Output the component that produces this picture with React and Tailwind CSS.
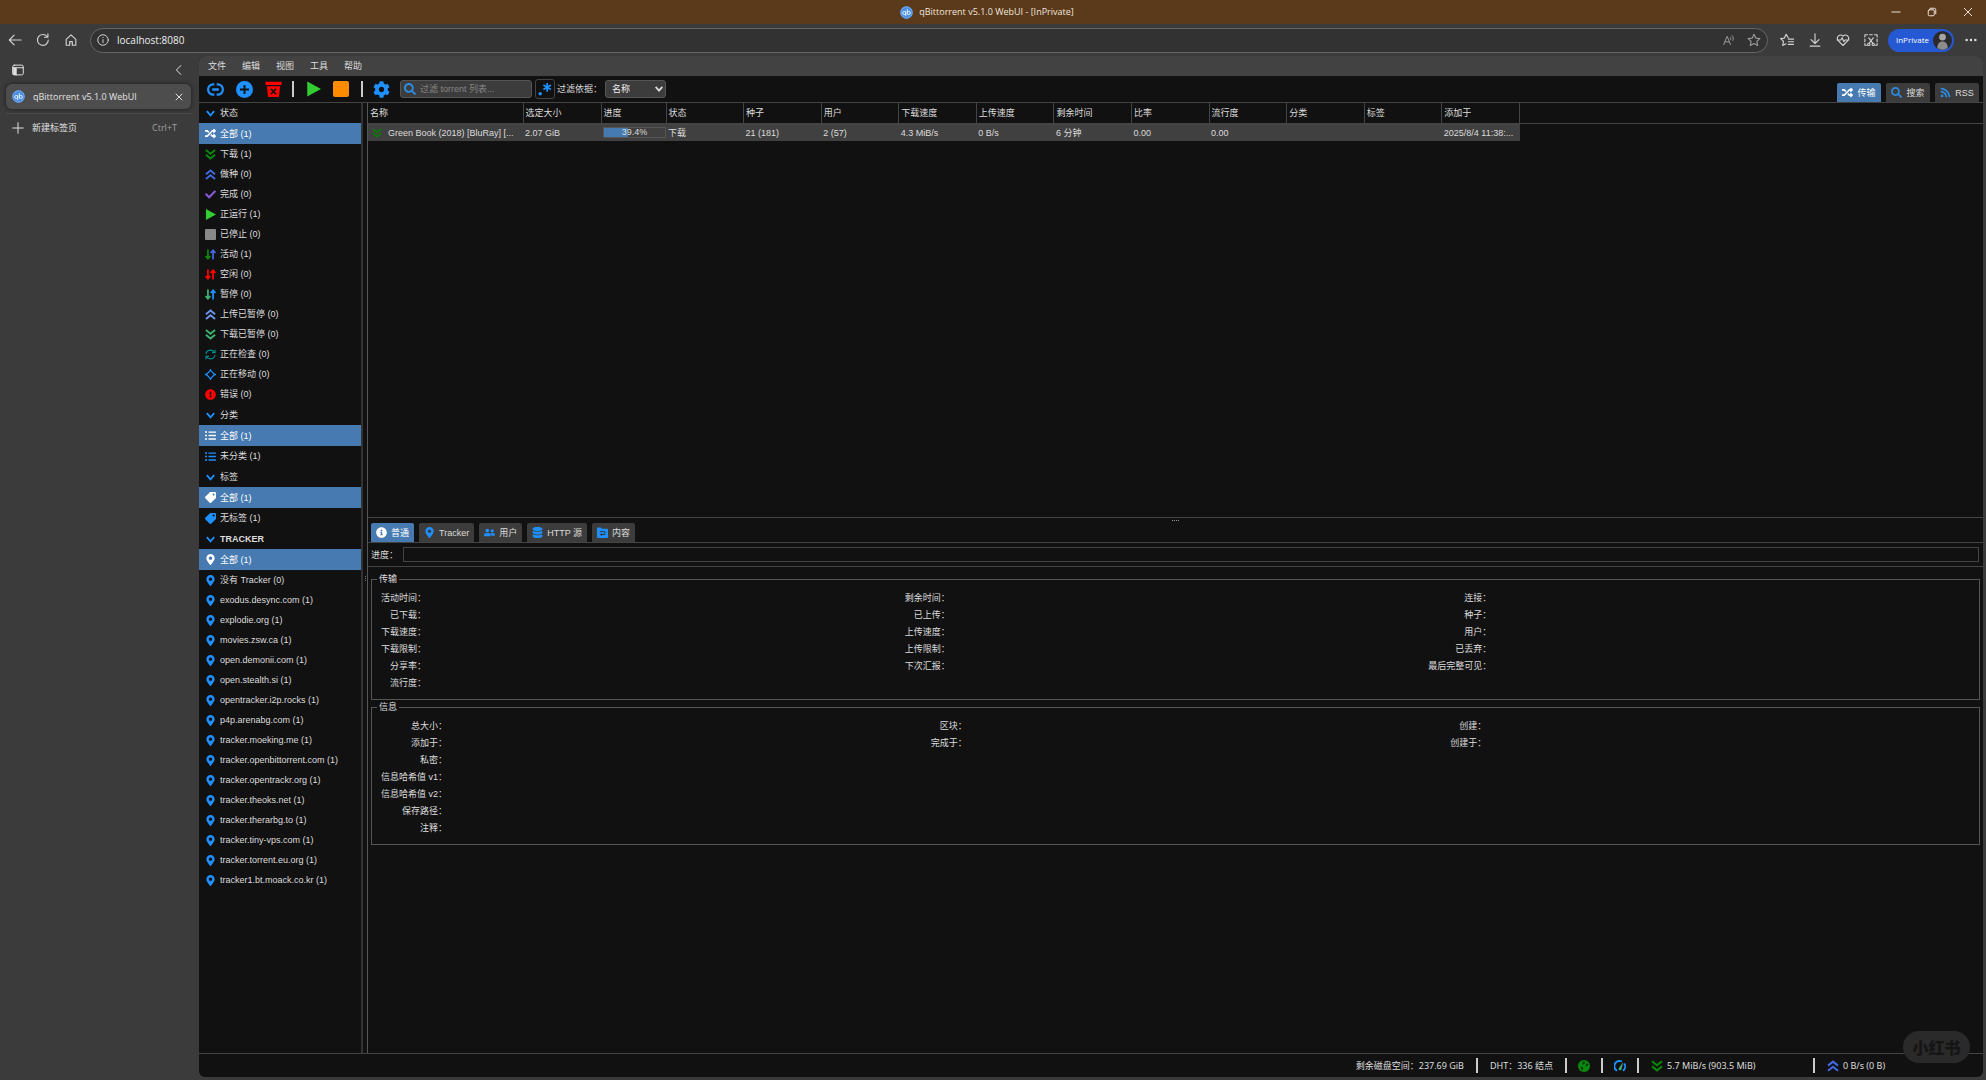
import React, { useState } from "react";
import {
  FaRandom,
  FaCheck,
  FaTag,
  FaMapMarkerAlt,
  FaListUl,
  FaInfoCircle,
  FaUserFriends,
  FaDatabase,
  FaSearch,
  FaRss,
  FaCog,
  FaExclamationCircle,
} from "react-icons/fa";

const Svg = ({ className, children, box = "0 0 16 16" }) => (
  <svg
    className={className}
    viewBox={box}
    fill="none"
    stroke="currentColor"
    strokeWidth="1.3"
    strokeLinecap="round"
    strokeLinejoin="round"
    aria-hidden="true"
  >
    {children}
  </svg>
);

const Favicon = () => (
  <svg className="size-[13px] shrink-0" viewBox="0 0 16 16" aria-hidden="true">
    <circle cx="8" cy="8" r="7.7" fill="#4c8ee0" />
    <circle cx="8" cy="8" r="7" fill="none" stroke="#7db2ee" />
    <g fill="none" stroke="#dcecff" strokeWidth="1.2">
      <circle cx="5.2" cy="8.6" r="1.9" />
      <path d="M7.1 6.5v6M9 3.8v6.6" />
      <circle cx="10.9" cy="8.6" r="1.9" />
    </g>
  </svg>
);

const Chevron = ({ className }) => (
  <svg className={className} viewBox="0 0 12 12" fill="none" stroke="currentColor" strokeWidth="2" aria-hidden="true">
    <path d="M2 3.5l4 4.5 4-4.5" />
  </svg>
);

const DoubleDown = ({ className }) => (
  <svg className={className} viewBox="0 0 12 12" fill="none" stroke="currentColor" strokeWidth="2.1" aria-hidden="true">
    <path d="M1 1.200l5 4 5-4M1 6.400l5 4 5-4" />
  </svg>
);

const DoubleUp = ({ className }) => (
  <svg className={className} viewBox="0 0 12 12" fill="none" stroke="currentColor" strokeWidth="2.1" aria-hidden="true">
    <path d="M1 5.600l5-4 5 4M1 10.800l5-4 5 4" />
  </svg>
);

const Play = ({ className }) => (
  <svg className={className} viewBox="0 0 12 12" fill="#32cd32" aria-hidden="true">
    <path d="M1 0l11 6-11 6z" />
  </svg>
);

const Arrows = ({ down, up }) => (
  <svg className="size-[11px] shrink-0" viewBox="0 0 12 12" fill="none" strokeWidth="1.9" aria-hidden="true">
    <path d="M3.2 .5v10M.6 7.600l2.600 3 2.600-3" stroke={down} />
    <path d="M8.800 11.500V2M6.200 4.400l2.600-3 2.600 3" stroke={up} />
  </svg>
);

const Checking = () => (
  <svg className="size-[11px] shrink-0" viewBox="0 0 12 12" fill="none" stroke="#008b8b" strokeWidth="1.3" aria-hidden="true">
    <path d="M1 5.2C1.6 2.6 3.600 1.200 6 1.200c1.900 0 3.400.9 4.300 2.400M11 6.800C10.400 9.400 8.400 10.800 6 10.800c-1.900 0-3.400-.9-4.300-2.400" />
    <path d="M10.900 .8v3.200H7.700M1.100 11.200V8h3.200" />
  </svg>
);

const Moving = () => (
  <svg className="size-[11px] shrink-0" viewBox="0 0 12 12" fill="none" stroke="#1e90ff" strokeWidth="1.4" aria-hidden="true">
    <path d="M6 1.500L10.500 6 6 10.500 1.500 6z" />
    <path d="M6 0v2M6 10v2M0 6h2M10 6h2" />
  </svg>
);

const FolderIcon = ({ className }) => (
  <svg className={className} viewBox="0 0 12 12" aria-hidden="true">
    <path d="M0 1.500C0 .9.400.5 1 .5h3l1.300 1.300H11c.6 0 1 .4 1 1v8.200c0 .6-.4 1-1 1H1c-.6 0-1-.4-1-1z" fill="#1e90ff" />
    <path d="M3 5h5.500v3.200H4M5.300 6.800L3.800 8.200l1.500 1.400" fill="none" stroke="#333" />
  </svg>
);

const dot = "size-[11px] shrink-0";

const status = [
  { icon: <FaRandom className={dot} />, label: "全部 (1)", active: true },
  { icon: <DoubleDown className={`${dot} text-[#0a8a0a]`} />, label: "下载 (1)" },
  { icon: <DoubleUp className={`${dot} text-[#4169e1]`} />, label: "做种 (0)" },
  { icon: <FaCheck className={`${dot} text-[#8458d6]`} />, label: "完成 (0)" },
  { icon: <Play className="size-[11px] shrink-0" />, label: "正运行 (1)" },
  { icon: <span className="size-[11px] shrink-0 rounded-[1px] bg-[#888888]" />, label: "已停止 (0)" },
  { icon: <Arrows down="#0a8a0a" up="#4169e1" />, label: "活动 (1)" },
  { icon: <Arrows down="#ff0000" up="#ff0000" />, label: "空闲 (0)" },
  { icon: <Arrows down="#3cb371" up="#1e90ff" />, label: "暂停 (0)" },
  { icon: <DoubleUp className={`${dot} text-[#6c95ed]`} />, label: "上传已暂停 (0)" },
  { icon: <DoubleDown className={`${dot} text-[#3cb371]`} />, label: "下载已暂停 (0)" },
  { icon: <Checking />, label: "正在检查 (0)" },
  { icon: <Moving />, label: "正在移动 (0)" },
  { icon: <FaExclamationCircle className={`${dot} text-[#ff0000]`} />, label: "错误 (0)" },
];

const categories = [
  { icon: <FaListUl className={dot} />, label: "全部 (1)", active: true },
  { icon: <FaListUl className={`${dot} text-[#1e90ff]`} />, label: "未分类 (1)" },
];

const tags = [
  { icon: <FaTag className={`${dot} -scale-x-100`} />, label: "全部 (1)", active: true },
  { icon: <FaTag className={`${dot} -scale-x-100 text-[#1e90ff]`} />, label: "无标签 (1)" },
];

const pin = <FaMapMarkerAlt className={`${dot} text-[#1e90ff]`} />;
const trackers = [
  { icon: <FaMapMarkerAlt className={dot} />, label: "全部 (1)", active: true },
  { icon: pin, label: "没有 Tracker (0)" },
  { icon: pin, label: "exodus.desync.com (1)" },
  { icon: pin, label: "explodie.org (1)" },
  { icon: pin, label: "movies.zsw.ca (1)" },
  { icon: pin, label: "open.demonii.com (1)" },
  { icon: pin, label: "open.stealth.si (1)" },
  { icon: pin, label: "opentracker.i2p.rocks (1)" },
  { icon: pin, label: "p4p.arenabg.com (1)" },
  { icon: pin, label: "tracker.moeking.me (1)" },
  { icon: pin, label: "tracker.openbittorrent.com (1)" },
  { icon: pin, label: "tracker.opentrackr.org (1)" },
  { icon: pin, label: "tracker.theoks.net (1)" },
  { icon: pin, label: "tracker.therarbg.to (1)" },
  { icon: pin, label: "tracker.tiny-vps.com (1)" },
  { icon: pin, label: "tracker.torrent.eu.org (1)" },
  { icon: pin, label: "tracker1.bt.moack.co.kr (1)" },
];

const columns = [
  ["名称", "Green Book (2018) [BluRay] [..."],
  ["选定大小", "2.07 GiB"],
  ["进度", "39.4%"],
  ["状态", "下载"],
  ["种子", "21 (181)"],
  ["用户", "2 (57)"],
  ["下载速度", "4.3 MiB/s"],
  ["上传速度", "0 B/s"],
  ["剩余时间", "6 分钟"],
  ["比率", "0.00"],
  ["流行度", "0.00"],
  ["分类", ""],
  ["标签", ""],
  ["添加于", "2025/8/4 11:38:..."],
];

const transferRows = [
  ["活动时间：", "剩余时间：", "连接："],
  ["已下载：", "已上传：", "种子："],
  ["下载速度：", "上传速度：", "用户："],
  ["下载限制：", "上传限制：", "已丢弃："],
  ["分享率：", "下次汇报：", "最后完整可见："],
  ["流行度：", "", ""],
];

const infoRows = [
  ["总大小：", "区块：", "创建："],
  ["添加于：", "完成于：", "创建于："],
  ["私密：", "", ""],
  ["信息哈希值 v1：", "", ""],
  ["信息哈希值 v2：", "", ""],
  ["保存路径：", "", ""],
  ["注释：", "", ""],
];

const TitleBar = () => (
  <header className="flex h-6 shrink-0 items-center bg-[#5b391b] text-[9px] text-[#f0e6dc]">
    <div className="flex-1" />
    <div className="flex items-center gap-1.5">
      <Favicon />
      <span>qBittorrent v5.1.0 WebUI - [InPrivate]</span>
    </div>
    <div className="flex flex-1 items-center justify-end gap-6 pr-3">
      <button type="button" aria-label="最小化">
        <Svg className="size-3">
          <path d="M2.500 8h11" />
        </Svg>
      </button>
      <button type="button" aria-label="还原">
        <Svg className="size-3">
          <rect x="3" y="5" width="8" height="8" rx="1.500" />
          <path d="M5.500 3h5.500a2 2 0 0 1 2 2v5.500" />
        </Svg>
      </button>
      <button type="button" aria-label="关闭">
        <Svg className="size-3">
          <path d="M3 3l10 10M13 3L3 13" />
        </Svg>
      </button>
    </div>
  </header>
);

const AddressBar = () => (
  <div className="flex h-8 shrink-0 items-center px-2 text-[#d2d2d2]">
    <div className="flex w-[82px] shrink-0 items-center gap-3.5">
      <button type="button" aria-label="后退">
        <Svg className="size-3.5">
          <path d="M15 8H1.500M7 2.500L1.500 8 7 13.500" />
        </Svg>
      </button>
      <button type="button" aria-label="刷新">
        <Svg className="size-3.5">
          <path d="M14 8.200A6.200 6.200 0 1 1 12.600 4M13.600 1v3.800H9.800" />
        </Svg>
      </button>
      <button type="button" aria-label="主页">
        <Svg className="size-3.5">
          <path d="M2.500 7.200L8 2.200l5.500 5V14h-4v-4.200H6.500V14h-4z" />
        </Svg>
      </button>
    </div>
    <div className="flex h-[25px] flex-1 items-center rounded-full border border-[#666666] bg-[#323232] px-1.5">
      <Svg className="size-3">
        <circle cx="8" cy="8" r="7" />
        <path d="M8 7.500v4M8 4.600v.2" />
      </Svg>
      <input
        aria-label="地址"
        defaultValue="localhost:8080"
        className="ml-2 flex-1 bg-transparent text-[10px] text-[#eeeeee] outline-none"
      />
      <button type="button" aria-label="大声朗读" className="mr-3 text-[#9a9a9a]">
        <Svg className="size-3">
          <path d="M1 14L5.500 3 10 14M2.600 10.500h5.800M9.500 4.500c1 .9 1 2.200.6 3M12 2c2 1.800 2 4.500 1.200 6.500" />
        </Svg>
      </button>
      <button type="button" aria-label="收藏此页" className="text-[#9a9a9a]">
        <Svg className="size-3.5">
          <path d="M8 1.500l2 4.300 4.700.6-3.400 3.200.9 4.700L8 12l-4.200 2.300.9-4.700L1.300 6.400 6 5.800z" />
        </Svg>
      </button>
    </div>
    <div className="flex items-center gap-3.5 pr-2.5 pl-3">
      <button type="button" aria-label="收藏夹">
        <Svg className="size-3.5">
          <path d="M9.300 5.400L7 1.500l-2 4.300-4.300.5L4 9.600l-.9 4.600 3.700-2M9.500 7h6M9.500 10h6M9.500 13h6" />
        </Svg>
      </button>
      <button type="button" aria-label="下载">
        <Svg className="size-3.5">
          <path d="M8 1v10.500M3.500 7.500L8 12l4.500-4.500M2.500 15h11" />
        </Svg>
      </button>
      <button type="button" aria-label="浏览器概要">
        <Svg className="size-3.5">
          <path d="M8 14.300L2.500 8.800C-.5 5 4.500-.2 8 3.700c3.500-3.900 8.500 1.300 5.500 5.100zM1.500 8h4L7 5.500 9 10l1.300-2h4.200" />
        </Svg>
      </button>
      <button type="button" aria-label="网页捕获">
        <Svg className="size-3.5">
          <path d="M1 4.500V2h3M6.500 2h3M12 2h3v2.500M15 7v3M1 7v3M1 12v2h2.500M15 12v2h-2.500M5.500 5.500l4.500 6M10.500 5.500L6 11.500" />
          <circle cx="5.500" cy="13" r="1.300" />
          <circle cx="10.500" cy="13" r="1.300" />
        </Svg>
      </button>
    </div>
    <button
      type="button"
      className="flex h-[23px] items-center gap-1 rounded-full bg-[#2459d3] pr-0.5 pl-2 text-[8px] text-white"
    >
      InPrivate
      <svg className="size-[19px]" viewBox="0 0 20 20" aria-hidden="true">
        <circle cx="10" cy="10" r="10" fill="#2a2a2a" />
        <circle cx="10" cy="6.500" r="3.500" fill="#a5a5a5" />
        <path d="M4.500 18c0-4.500 2-7 5.500-7s5.500 2.500 5.500 7a10 10 0 0 1-11 0z" fill="#8c8c8c" />
      </svg>
    </button>
    <button type="button" aria-label="设置及其他" className="ml-2.5">
      <svg className="size-3.5" viewBox="0 0 16 16" fill="#e0e0e0" aria-hidden="true">
        <circle cx="3" cy="8" r="1.400" />
        <circle cx="8" cy="8" r="1.400" />
        <circle cx="13" cy="8" r="1.400" />
      </svg>
    </button>
  </div>
);

const VerticalTabs = () => (
  <aside className="w-[199px] shrink-0 px-1.5 text-[9px] text-[#e4e4e4]">
    <div className="flex h-7 items-center justify-between pr-2 pl-1.5">
      <button type="button" aria-label="标签页操作">
        <Svg className="size-3">
          <rect x="1" y="1.500" width="14" height="13" rx="2" />
          <path d="M1 5h14M5.500 5v9.500" />
          <path d="M2 5.500h3v8.500H2z" fill="currentColor" />
        </Svg>
      </button>
      <button type="button" aria-label="折叠窗格">
        <Svg className="size-3">
          <path d="M10.500 2L4.500 8l6 6" />
        </Svg>
      </button>
    </div>
    <div className="flex h-[25px] w-[185px] items-center rounded-md bg-[#4d4d4d] px-1.5 shadow-[0_0_4px_#1c1c1c]">
      <Favicon />
      <span className="ml-2 flex-1">qBittorrent v5.1.0 WebUI</span>
      <button type="button" aria-label="关闭标签页">
        <Svg className="size-3">
          <path d="M4 4l8 8M12 4l-8 8" />
        </Svg>
      </button>
    </div>
    <div className="mt-1 w-[185px] border-t border-[#484848]" />
    <button type="button" className="flex h-7 w-[185px] items-center px-1.5">
      <Svg className="size-3">
        <path d="M8 1v14M1 8h14" />
      </Svg>
      <span className="ml-2 flex-1 text-left">新建标签页</span>
      <span className="mr-2 text-[#a0a0a0]">Ctrl+T</span>
    </button>
  </aside>
);

const Toolbar = ({ view, setView }) => (
  <div className="flex h-[27px] shrink-0 items-center border-b border-[#444444] pl-2">
    <div className="flex items-center gap-3">
      <button type="button" aria-label="添加链接" className="text-[#1e90ff]">
        <svg className="size-[17px]" viewBox="0 0 18 18" fill="none" stroke="currentColor" strokeWidth="2.400" aria-hidden="true">
          <path d="M7.800 14.500H6a5.500 5.500 0 0 1-4.800-5.500A5.500 5.500 0 0 1 6 3.500h1.800M10.200 3.500H12A5.500 5.500 0 0 1 16.800 9a5.500 5.500 0 0 1-4.800 5.500h-1.800M5.500 9h7" />
        </svg>
      </button>
      <button type="button" aria-label="添加种子">
        <svg className="size-[17px]" viewBox="0 0 18 18" aria-hidden="true">
          <circle cx="9" cy="9" r="9" fill="#1e90ff" />
          <path d="M9 4.200v9.600M4.200 9h9.600" stroke="#111111" strokeWidth="2" />
        </svg>
      </button>
      <button type="button" aria-label="删除">
        <svg className="size-[17px]" viewBox="0 0 18 18" aria-hidden="true">
          <path d="M.5.800h17v3.400H.5zM2 5.600h14L14.800 17H3.200z" fill="#ff0000" />
          <path d="M6.300 8.200l5.400 5.800M11.700 8.200L6.300 14" stroke="#111111" strokeWidth="1.800" />
        </svg>
      </button>
    </div>
    <div className="ml-2.5 h-4 w-0.5 bg-[#cccccc]" />
    <button type="button" aria-label="启动" className="ml-3">
      <Play className="h-4 w-[15px]" />
    </button>
    <button type="button" aria-label="停止" className="ml-3 size-4 rounded-[2px] bg-[#ff8c00]" />
    <div className="ml-3 h-4 w-0.5 bg-[#cccccc]" />
    <button type="button" aria-label="选项" className="ml-2.5 text-[#1e90ff]">
      <FaCog className="size-[17px]" />
    </button>
    <div className="ml-2.5 flex h-[18px] w-[132px] items-center rounded-[3px] border border-[#555555] bg-[#3c3c3c] px-[3px]">
      <FaSearch className="size-3 shrink-0 text-[#2c8ae0]" />
      <input
        aria-label="过滤 torrent 列表"
        placeholder="过滤 torrent 列表..."
        className="ml-1 w-full bg-transparent text-[9px] outline-none placeholder:text-[#858585]"
      />
    </div>
    <button
      type="button"
      aria-label="使用正则表达式"
      className="ml-[3px] flex h-5 w-5 items-center justify-center rounded-[3px] border border-[#444444]"
    >
      <svg className="size-3.5" viewBox="0 0 16 16" aria-hidden="true">
        <circle cx="2.500" cy="13.500" r="2" fill="#1e90ff" />
        <path d="M10.500 1v10M6.200 3.500l8.600 5M14.800 3.500l-8.600 5" stroke="#1e90ff" strokeWidth="2" />
      </svg>
    </button>
    <label htmlFor="filterBy" className="ml-0.5 w-12 whitespace-nowrap">
      过滤依据：
    </label>
    <div className="relative">
      <select
        id="filterBy"
        className="h-[18px] w-[61px] appearance-none rounded-[3px] border border-[#555555] bg-[#3c3c3c] pl-1.5 text-[9px] text-[#eeeeee]"
      >
        <option>名称</option>
        <option>保存路径</option>
      </select>
      <Chevron className="pointer-events-none absolute top-1 right-0.5 size-2.5" />
    </div>
    <div className="ml-auto flex gap-[5px] self-end pr-1">
      {[
        ["transfers", "传输", <FaRandom className="size-[11px]" />],
        ["search", "搜索", <FaSearch className="size-[11px] text-[#2c8ae0]" />],
        ["rss", "RSS", <FaRss className="size-[11px] text-[#2c8ae0]" />],
      ].map(([id, label, icon]) => (
        <button
          key={id}
          type="button"
          onClick={() => setView(id)}
          className={
            view == id
              ? "flex h-[19px] w-11 items-center justify-center gap-1 rounded-t-[2px] bg-[#467ab0] text-white"
              : "flex h-[19px] w-11 items-center justify-center gap-1 rounded-t-[2px] bg-[#3c3c3c]"
          }
        >
          {icon}
          {label}
        </button>
      ))}
    </div>
  </div>
);

const FilterGroup = ({ title, items, bold }) => {
  const [open, setOpen] = useState(true);
  return (
    <section>
      <button
        type="button"
        onClick={() => setOpen(!open)}
        className="flex h-5 w-full items-center gap-1 pl-1.5"
      >
        <Chevron className="size-[11px] text-[#1e90ff]" />
        <span className={bold ? "font-bold" : ""}>{title}</span>
      </button>
      {open && (
        <ul>
          {items.map((item) => (
            <li
              key={item.label}
              className={
                item.active
                  ? "flex h-[21px] items-center gap-1 bg-[#467ab0] pl-1.5 text-white"
                  : "flex h-5 items-center gap-1 pl-1.5"
              }
            >
              {item.icon}
              <span className="whitespace-nowrap">{item.label}</span>
            </li>
          ))}
        </ul>
      )}
    </section>
  );
};

const TorrentTable = () => (
  <div className="h-[414px] shrink-0 bg-[linear-gradient(#444444,#444444)] bg-[length:100%_1px] bg-[position:0_20px] bg-no-repeat">
    <table className="w-[1152px] table-fixed border-collapse text-left">
      <colgroup>
        <col className="w-[155px]" />
        <col className="w-[78px]" />
        <col className="w-[65px]" />
      </colgroup>
      <thead>
        <tr className="h-[21px]">
          {columns.map(([name]) => (
            <th key={name} className="border-r border-b border-[#444444] p-0 pl-0.5 font-normal">
              {name}
            </th>
          ))}
        </tr>
      </thead>
      <tbody>
        <tr className="h-[17px] bg-[#404040]">
          {columns.map(([name, value]) => (
            <td key={name} className="p-0 pl-0.5 whitespace-nowrap">
              {name == "名称" ? (
                <div className="flex items-center gap-1.5 pl-0.5">
                  <DoubleDown className="size-2.5 shrink-0 text-[#0a7a0a]" />
                  <span>{value}</span>
                </div>
              ) : name == "进度" ? (
                <div className="relative h-[11px] border border-[#555555] text-center leading-[9px]">
                  <div className="absolute inset-y-0 left-0 w-[39%] bg-[#467ab0]" />
                  <span className="relative">{value}</span>
                </div>
              ) : (
                value
              )}
            </td>
          ))}
        </tr>
      </tbody>
    </table>
  </div>
);

const tabs = [
  ["普通", <FaInfoCircle className="size-[11px]" />],
  ["Tracker", <FaMapMarkerAlt className="size-[11px] text-[#1e90ff]" />],
  ["用户", <FaUserFriends className="size-[11px] text-[#1e90ff]" />],
  ["HTTP 源", <FaDatabase className="size-[11px] text-[#1e90ff]" />],
  ["内容", <FolderIcon className="size-[11px]" />],
];

const InfoFieldset = ({ title, rows }) => (
  <fieldset className="mx-[3px] border border-[#555555] px-[9px] pt-1 pb-[7px]">
    <legend className="-ml-1 px-0.5 leading-[14px]">{title}</legend>
    <div className="grid grid-cols-[auto_1fr_auto_1fr_auto_1fr]">
      {rows.flat().map((label, i) => (
        <React.Fragment key={i}>
          <span className="h-[17px] text-right leading-[17px] whitespace-nowrap">{label}</span>
          <span />
        </React.Fragment>
      ))}
    </div>
  </fieldset>
);

const DetailsPanel = () => {
  const [tab, setTab] = useState("普通");
  return (
    <section className="flex-1 border-t border-[#444444]">
      <div className="flex h-[5px] items-center justify-center gap-px">
        <span className="size-px bg-[#999999]" />
        <span className="size-px bg-[#999999]" />
        <span className="size-px bg-[#999999]" />
        <span className="size-px bg-[#999999]" />
      </div>
      <div className="flex gap-[5px] border-b border-[#444444] pl-[3px]">
        {tabs.map(([name, icon]) => (
          <button
            key={name}
            type="button"
            onClick={() => setTab(name)}
            className={
              tab == name
                ? "flex h-[19px] items-center gap-1 rounded-t-[2px] bg-[#467ab0] px-[5px] text-white"
                : "flex h-[19px] items-center gap-1 rounded-t-[2px] bg-[#3c3c3c] px-[5px]"
            }
          >
            {icon}
            {name}
          </button>
        ))}
      </div>
      <div className="flex h-6 items-center border-b border-[#444444] pr-1 pl-[3px]">
        <span className="w-8">进度：</span>
        <div className="h-[15px] flex-1 border border-[#444444]" />
      </div>
      <div className="flex flex-col pt-[5px]">
        <InfoFieldset title="传输" rows={transferRows} />
        <InfoFieldset title="信息" rows={infoRows} />
      </div>
    </section>
  );
};

const Sep = () => <span className="h-[15px] w-0.5 bg-[#cccccc]" />;

const StatusBar = () => (
  <footer className="flex h-6 shrink-0 items-center justify-end border-t border-[#444444] pr-[92px] font-['Noto_Sans','Noto_Sans_CJK_SC',sans-serif] whitespace-nowrap">
    <span className="mr-3">剩余磁盘空间：237.69 GiB</span>
    <Sep />
    <span className="mx-3">DHT：336 结点</span>
    <Sep />
    <svg className="mx-[11px] size-3" viewBox="0 0 12 12" aria-hidden="true">
      <circle cx="6" cy="6" r="6" fill="#0a8a0a" />
      <path d="M4.500 1.500l3 .3-.8 2L4.500 5zM8.500 3l2 1.500-1.500 2-1.500-1zM2 6.500l2.500.5 1 2-1.500 1.500z" fill="#0c3d0c" />
    </svg>
    <Sep />
    <svg className="mx-[11px] size-3" viewBox="0 0 12 12" fill="none" aria-hidden="true">
      <path d="M3 10.700A5.200 5.200 0 0 1 6 1c.7 0 1.300.1 1.800.4M10.200 3.500A5.200 5.200 0 0 1 9 10.700" stroke="#1e90ff" strokeWidth="1.900" />
      <path d="M4.600 8.800L9.200 1.800 7.400 9.600a1.500 1.500 0 0 1-2.800-.8z" fill="#3cb371" />
    </svg>
    <Sep />
    <DoubleDown className="ml-3 size-3 text-[#0a8a0a]" />
    <span className="ml-1 w-[146px]">5.7 MiB/s (903.5 MiB)</span>
    <Sep />
    <DoubleUp className="ml-3 size-3 text-[#4169e1]" />
    <span className="ml-1 w-12">0 B/s (0 B)</span>
  </footer>
);

const App = () => {
  const [view, setView] = useState("transfers");
  return (
    <div className="relative flex h-screen flex-col overflow-hidden bg-[#3b3b3b] font-['Open_Sans','Noto_Sans_CJK_SC',sans-serif]">
      <TitleBar />
      <AddressBar />
      <div className="flex min-h-0 flex-1">
        <VerticalTabs />
        <main className="mr-[3px] mb-[3px] flex min-w-0 flex-1 flex-col overflow-hidden rounded-md bg-[#111111] font-['Liberation_Sans','Noto_Sans_CJK_SC',sans-serif] text-[9px] leading-3 text-[#dddddd]">
          <nav className="flex h-5 shrink-0 items-center bg-[#424242] pl-px">
            {["文件", "编辑", "视图", "工具", "帮助"].map((m) => (
              <a key={m} href="#" className="px-2">
                {m}
              </a>
            ))}
          </nav>
          <Toolbar view={view} setView={setView} />
          <div className="flex min-h-0 flex-1">
            <aside className="flex w-[164px] shrink-0 flex-col gap-px overflow-hidden border-r-2 border-[#333333]">
              <FilterGroup title="状态" items={status} />
              <FilterGroup title="分类" items={categories} />
              <FilterGroup title="标签" items={tags} />
              <FilterGroup title="TRACKER" items={trackers} bold />
            </aside>
            <div className="flex w-1 shrink-0 flex-col items-center justify-center gap-px">
              <span className="size-px bg-[#777777]" />
              <span className="size-px bg-[#777777]" />
              <span className="size-px bg-[#777777]" />
            </div>
            <div className="flex min-w-0 flex-1 flex-col border-l border-[#555555]">
              <TorrentTable />
              <DetailsPanel />
            </div>
          </div>
          <StatusBar />
        </main>
      </div>
      <div className="absolute right-4 bottom-[17px] flex h-8 w-[67px] items-center justify-center rounded-full bg-[#2a2a2a] font-['Noto_Sans_CJK_SC',sans-serif] text-base font-black text-[#151515]">
        小红书
      </div>
    </div>
  );
};

export default App;
